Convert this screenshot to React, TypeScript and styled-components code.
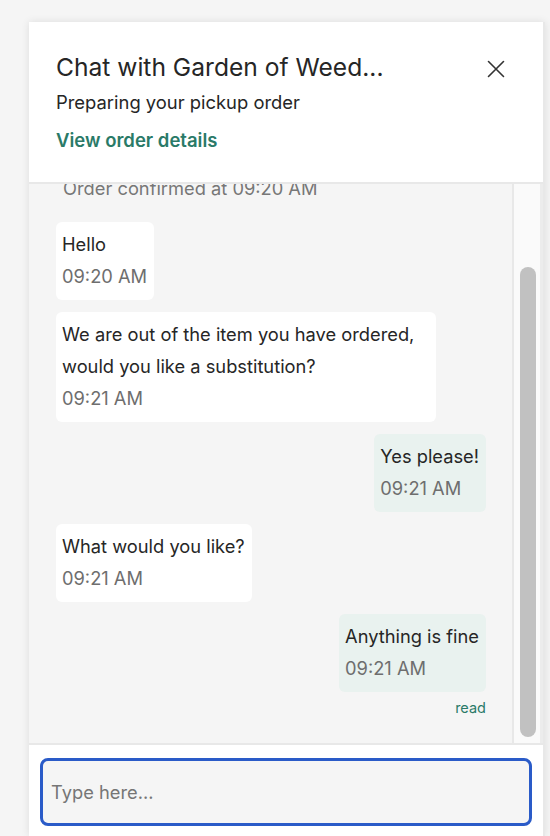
import React, { useLayoutEffect, useRef, useState } from "react";
import styled, { createGlobalStyle } from "styled-components";

const GlobalStyle = createGlobalStyle`
  html, body {
    margin: 0;
    padding: 0;
    height: 100%;
    overflow: hidden;
    background: #f5f5f5;
    font-family: "Inter", "Noto Sans", "Liberation Sans", sans-serif;
  }
  * { box-sizing: border-box; }
`;

const Page = styled.div`
  padding: 22px 5px 0 29px;
  height: 836px;
`;

const Panel = styled.section`
  width: 516px;
  height: 814px;
  display: flex;
  flex-direction: column;
  background: #ffffff;
  box-shadow: 0 0 8px rgba(0, 0, 0, 0.1);
  border-right: 2px solid #e8e8e8;
`;

const Header = styled.header`
  display: flex;
  align-items: flex-start;
  justify-content: space-between;
  padding: 29px 37px 29px 27px;
  border-bottom: 2px solid #e8e8e8;
  flex: 0 0 auto;
`;

const HeaderText = styled.div`
  display: flex;
  flex-direction: column;
  min-width: 0;
`;

const Title = styled.h1`
  margin: 0;
  font-size: 24.6px;
  line-height: 32px;
  font-weight: 400;
  color: #262626;
  white-space: nowrap;
`;

const Subtitle = styled.p`
  margin: 6px 0 0;
  font-size: 18.4px;
  line-height: 26px;
  color: #262626;
`;

const DetailsLink = styled.a`
  margin-top: 12px;
  font-size: 18.5px;
  line-height: 26px;
  font-weight: 600;
  color: #2a7a68;
  text-decoration: none;
  cursor: pointer;
`;

const CloseButton = styled.button`
  border: none;
  background: none;
  padding: 0;
  margin-top: 8px;
  width: 20px;
  height: 20px;
  display: flex;
  align-items: center;
  justify-content: center;
  cursor: pointer;
  color: #333;
`;

const Body = styled.div`
  flex: 1 1 auto;
  min-height: 0;
  display: flex;
  background: #f5f5f5;
  border-bottom: 2px solid #e8e8e8;
`;

const Messages = styled.div`
  flex: 1 1 auto;
  min-width: 0;
  overflow: hidden;
  padding: 80px 26px 25px 27px;
  display: flex;
  flex-direction: column;
`;

const ScrollTrack = styled.div`
  flex: 0 0 31px;
  background: #fafafa;
  border-left: 2px solid #e8e8e8;
  border-right: 3px solid #ececec;
  padding: 6px 2px 6px 6px;
  display: flex;
  flex-direction: column;
`;

const ScrollThumb = styled.div`
  width: 16px;
  background: #c1c1c1;
  border-radius: 8px;
`;

const SystemLine = styled.div`
  font-size: 18.3px;
  line-height: 32px;
  color: #777777;
  padding-left: 7px;
  margin-bottom: 18px;
`;

const Thread = styled.div`
  display: flex;
  flex-direction: column;
  gap: 12px;
`;

const Bubble = styled.div<{ $mine?: boolean }>`
  align-self: ${(p) => (p.$mine ? "flex-end" : "flex-start")};
  background: ${(p) => (p.$mine ? "#e9f2ef" : "#ffffff")};
  border-radius: 6px;
  padding: 6px 7px 8px 6px;
  max-width: 380px;
`;

const BubbleText = styled.div`
  font-size: 18.3px;
  line-height: 32px;
  color: #262626;
`;

const Time = styled.div`
  font-size: 18.3px;
  line-height: 32px;
  color: #6e6e6e;
`;

const ReadMark = styled.div`
  align-self: flex-end;
  margin-top: -6px;
  font-size: 14.5px;
  line-height: 20px;
  color: #2a7a68;
`;

const Composer = styled.div`
  flex: 0 0 auto;
  padding: 13px 11px 10px;
  background: #ffffff;
`;

const Input = styled.input`
  width: 100%;
  height: 68px;
  border: 3px solid #2a5bc8;
  border-radius: 8px;
  background: #f5f5f5;
  padding: 0 8px;
  font-family: "Inter", "Noto Sans", "Liberation Sans", sans-serif;
  font-size: 18.3px;
  color: #262626;
  outline: none;
  caret-color: #222;

  &::placeholder {
    color: #767676;
  }
`;

type Msg = { text: string; time: string; mine?: boolean };

const messages: Msg[] = [
  { text: "Hello", time: "09:20 AM" },
  {
    text: "We are out of the item you have ordered, would you like a substitution?",
    time: "09:21 AM",
  },
  { text: "Yes please!", time: "09:21 AM", mine: true },
  { text: "What would you like?", time: "09:21 AM" },
  { text: "Anything is fine", time: "09:21 AM", mine: true },
];

const CloseIcon = () => (
  <svg width="18" height="18" viewBox="0 0 18 18" fill="none">
    <path d="M1.5 1.5 L16.5 16.5 M16.5 1.5 L1.5 16.5" stroke="#333" strokeWidth="1.6" strokeLinecap="round" />
  </svg>
);

export default function App() {
  const listRef = useRef<HTMLDivElement>(null);
  const [thumb, setThumb] = useState({ top: 76, height: 471 });

  useLayoutEffect(() => {
    const el = listRef.current;
    if (!el) return;
    el.scrollTop = el.scrollHeight;
    const track = el.clientHeight - 12;
    const ratio = el.clientHeight / el.scrollHeight;
    setThumb({
      top: (el.scrollTop / el.scrollHeight) * track,
      height: Math.max(24, ratio * track),
    });
  }, []);

  return (
    <>
      <GlobalStyle />
      <Page>
        <Panel>
          <Header>
            <HeaderText>
              <Title>Chat with Garden of Weed...</Title>
              <Subtitle>Preparing your pickup order</Subtitle>
              <DetailsLink>View order details</DetailsLink>
            </HeaderText>
            <CloseButton aria-label="Close">
              <CloseIcon />
            </CloseButton>
          </Header>
          <Body>
            <Messages ref={listRef}>
              <SystemLine>Order confirmed at 09:20 AM</SystemLine>
              <Thread>
                {messages.map((m, i) => (
                  <Bubble key={i} $mine={m.mine}>
                    <BubbleText>{m.text}</BubbleText>
                    <Time>{m.time}</Time>
                  </Bubble>
                ))}
                <ReadMark>read</ReadMark>
              </Thread>
            </Messages>
            <ScrollTrack aria-hidden>
              <ScrollThumb style={{ marginTop: thumb.top, height: thumb.height }} />
            </ScrollTrack>
          </Body>
          <Composer>
            <Input placeholder="Type here..." autoFocus />
          </Composer>
        </Panel>
      </Page>
    </>
  );
}
